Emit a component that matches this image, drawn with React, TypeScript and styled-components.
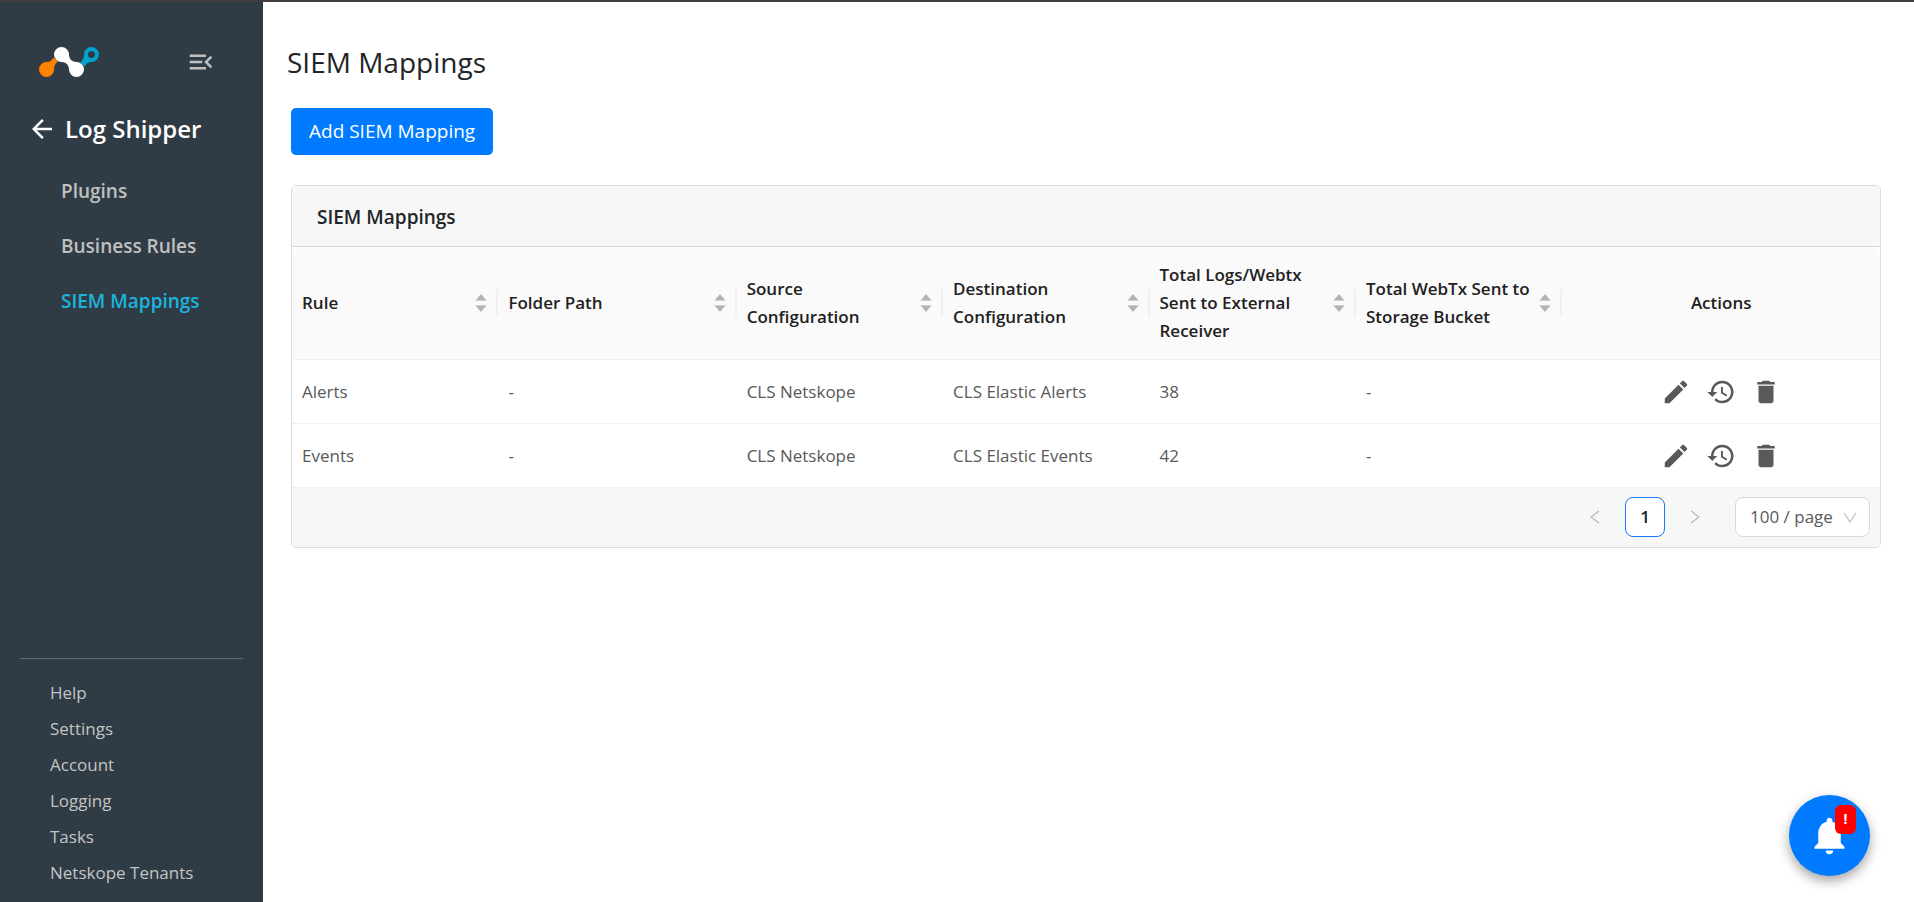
import React from 'react';
import styled, { createGlobalStyle } from 'styled-components';
import { MdArrowBack, MdDelete, MdEdit, MdHistory, MdMenuOpen, MdNotifications } from 'react-icons/md';

const GlobalStyle = createGlobalStyle`
  *, *::before, *::after { box-sizing: border-box; }
  body {
    margin: 0;
    background: #ffffff;
    color: #212529;
    font-family: "Open Sans", "Noto Sans", sans-serif;
    font-size: 17px;
    line-height: 28px;
  }
  button, select { font: inherit; color: inherit; }
  button { cursor: pointer; }
`;

const Page = styled.div`
  display: flex;
  min-height: 100vh;
  border-top: 2px solid #3f3d3f;
`;

const Sidebar = styled.aside`
  flex: 0 0 263px;
  display: flex;
  flex-direction: column;
  background: #303c45;
  color: #c0c0c0;
`;

const BrandRow = styled.div`
  display: flex;
  align-items: center;
  justify-content: space-between;
  padding: 45px 47px 0 39px;
`;

const IconButton = styled.button`
  display: inline-flex;
  padding: 0;
  border: 0;
  background: none;
`;

const SectionLink = styled.a`
  display: flex;
  align-items: center;
  gap: 8px;
  margin: 34px 0 0 27px;
  color: #ffffff;
  font-size: 24px;
  font-weight: 600;
  line-height: 36px;
  text-decoration: none;
`;

const Nav = styled.nav`
  display: flex;
  flex-direction: column;
  gap: 25px;
  padding: 29px 0 0 61px;
`;

const NavLink = styled.a<{ $active?: boolean }>`
  color: ${({ $active }) => ($active ? '#1cb4de' : '#c0c0c0')};
  font-size: 19px;
  font-weight: 600;
  line-height: 30px;
  text-decoration: none;
`;

const FooterNav = styled.nav`
  display: flex;
  flex-direction: column;
  margin: auto 20px 0;
  padding: 16px 0 11px 30px;
  border-top: 1px solid #5f6e73;
`;

const FooterLink = styled.a`
  color: #c4c4c4;
  line-height: 36px;
  text-decoration: none;
`;

const Main = styled.main`
  flex: 1;
  min-width: 0;
  padding: 40px 33px 40px 28px;
`;

const Title = styled.h1`
  margin: 0 0 0 -4px;
  font-size: 28px;
  font-weight: 400;
  line-height: 40px;
`;

const PrimaryButton = styled.button`
  margin: 26px 0 30px;
  padding: 8px 18px;
  border: 0;
  border-radius: 5px;
  background: #007bff;
  color: #ffffff;
  font-size: 19px;
  line-height: 31px;
`;

const Card = styled.section`
  border: 1px solid #dcdcdc;
  border-radius: 5px;
  overflow: hidden;
`;

const CardTitle = styled.h2`
  margin: 0;
  padding: 16px 25px 14px;
  border-bottom: 1px solid #d8d8d8;
  background: #f7f7f7;
  font-size: 19px;
  font-weight: 600;
  line-height: 30px;
`;

const Table = styled.table`
  width: 100%;
  table-layout: fixed;
  border-collapse: separate;
  border-spacing: 0;
`;

const HeadCell = styled.th<{ $width: string; $align?: string }>`
  width: ${({ $width }) => $width};
  padding: 14px 0 14px 10px;
  border-bottom: 1px solid #f0f0f0;
  background: #fafafa;
  color: #212121;
  font-weight: 600;
  text-align: ${({ $align }) => $align || 'left'};
  &:first-child { border-top-left-radius: 8px; }
  &:last-child { padding: 14px 10px; border-top-right-radius: 8px; }
`;

const HeadContent = styled.div`
  display: flex;
  align-items: center;
  gap: 4px;
`;

const HeadLabel = styled.span`
  flex: 1;
`;

const Sorter = styled.button`
  display: flex;
  align-items: center;
  height: 28px;
  padding: 0 9px 0 0;
  border: 0;
  border-right: 2px solid #f0f0f0;
  background: none;
`;

const Cell = styled.td`
  height: 64px;
  padding: 0 10px;
  border-bottom: 1px solid #f0f0f0;
  color: #595959;
`;

const Actions = styled.div`
  display: flex;
  justify-content: center;
  gap: 15px;
  color: #595959;
`;

const TableFooter = styled.div`
  display: flex;
  align-items: center;
  justify-content: flex-end;
  gap: 10px;
  padding: 9px 10px 10px;
  background: #f7f7f7;
`;

const PageButton = styled.button<{ $current?: boolean }>`
  display: flex;
  align-items: center;
  justify-content: center;
  width: 40px;
  height: 40px;
  padding: 0;
  border: 1px solid ${({ $current }) => ($current ? '#1677ff' : 'transparent')};
  border-radius: 8px;
  background: ${({ $current }) => ($current ? '#ffffff' : 'transparent')};
  color: #212121;
  font-weight: 600;
`;

const SelectWrap = styled.div`
  position: relative;
  margin-left: 10px;
  svg {
    position: absolute;
    top: 15px;
    right: 13px;
    pointer-events: none;
  }
`;

const PageSize = styled.select`
  appearance: none;
  display: block;
  width: 135px;
  height: 40px;
  padding: 0 14px;
  border: 1px solid #d9d9d9;
  border-radius: 8px;
  background: #ffffff;
  color: #595959;
`;

const Bell = styled.button`
  position: fixed;
  right: 44px;
  bottom: 26px;
  display: flex;
  align-items: center;
  justify-content: center;
  width: 81px;
  height: 81px;
  padding: 0;
  border: 0;
  border-radius: 50%;
  background: #007bff;
  color: #ffffff;
  box-shadow: 0 5px 12px rgba(0, 0, 0, 0.36);
`;

const BellBadge = styled.span`
  position: absolute;
  top: 10px;
  right: 14px;
  width: 21px;
  height: 29px;
  border-radius: 6px;
  background: #ff0000;
  font-size: 14px;
  font-weight: 700;
  line-height: 28px;
`;

const Logo = () => (
  <svg width="60" height="30" viewBox="0 0 60 30" role="img" aria-label="Netskope">
    <path
      fill="#ff8200"
      d="M7.500 15C11 15 12.500 13.500 14.500 10.500L18.800 14.600C16 17 15 19 15 22.500A7.500 7.500 0 1 1 7.500 15Z"
    />
    <path
      fillRule="evenodd"
      fill="#00a3cc"
      d="M52.500 0A7.500 7.500 0 0 1 52.500 15C49 15 47.500 16.500 45.500 19.500L41.200 15.400C44 13 45 11 45 7.500A7.500 7.500 0 0 1 52.500 0ZM52.500 4A3.500 3.500 0 1 0 52.500 11A3.500 3.500 0 1 0 52.500 4Z"
    />
    <path
      fill="#ffffff"
      d="M22.500 0A7.500 7.500 0 0 1 30 7.500C30 12 33 15 37.500 15A7.500 7.500 0 1 1 30 22.500C30 18 27 15 22.500 15A7.500 7.500 0 1 1 22.500 0Z"
    />
  </svg>
);

const SortIcon = () => (
  <svg width="12" height="18" viewBox="0 0 12 18" aria-hidden="true">
    <path d="M6 0L11 6H1Z" fill="#b3b3b3" />
    <path d="M0.500 6H11.500V7H0.500ZM0.500 11H11.500V12H0.500Z" fill="#d0d0d0" />
    <path d="M1 12H11L6 18Z" fill="#b3b3b3" />
  </svg>
);

const Chevron = ({ direction }: { direction: 'left' | 'right' }) => (
  <svg width="10" height="14" viewBox="0 0 10 14" fill="none" stroke="#b8b8b8" strokeWidth="1.300" aria-hidden="true">
    <path d={direction === 'left' ? 'M9 1L1 7L9 13' : 'M1 1L9 7L1 13'} />
  </svg>
);

const navItems = [
  { label: 'Plugins', active: false },
  { label: 'Business Rules', active: false },
  { label: 'SIEM Mappings', active: true },
];

const footerItems = ['Help', 'Settings', 'Account', 'Logging', 'Tasks', 'Netskope Tenants'];

const columns = [
  { label: 'Rule', width: '13%' },
  { label: 'Folder Path', width: '15%' },
  { label: 'Source Configuration', width: '13%' },
  { label: 'Destination Configuration', width: '13%' },
  { label: 'Total Logs/Webtx Sent to External Receiver', width: '13%' },
  { label: 'Total WebTx Sent to Storage Bucket', width: '13%' },
];

const rows = [
  ['Alerts', '-', 'CLS Netskope', 'CLS Elastic Alerts', '38', '-'],
  ['Events', '-', 'CLS Netskope', 'CLS Elastic Events', '42', '-'],
];

export default function App() {
  return (
    <>
      <GlobalStyle />
      <Page>
        <Sidebar>
          <BrandRow>
            <Logo />
            <IconButton type="button" aria-label="Collapse menu">
              <MdMenuOpen size={30} />
            </IconButton>
          </BrandRow>
          <SectionLink href="#">
            <MdArrowBack size={30} />
            Log Shipper
          </SectionLink>
          <Nav aria-label="Log Shipper">
            {navItems.map(({ label, active }) => (
              <NavLink key={label} href="#" $active={active} aria-current={active ? 'page' : undefined}>
                {label}
              </NavLink>
            ))}
          </Nav>
          <FooterNav aria-label="General">
            {footerItems.map((label) => (
              <FooterLink key={label} href="#">
                {label}
              </FooterLink>
            ))}
          </FooterNav>
        </Sidebar>
        <Main>
          <Title>SIEM Mappings</Title>
          <PrimaryButton type="button">Add SIEM Mapping</PrimaryButton>
          <Card>
            <CardTitle>SIEM Mappings</CardTitle>
            <Table>
              <thead>
                <tr>
                  {columns.map(({ label, width }) => (
                    <HeadCell key={label} $width={width} scope="col">
                      <HeadContent>
                        <HeadLabel>{label}</HeadLabel>
                        <Sorter type="button" aria-label={`Sort by ${label}`}>
                          <SortIcon />
                        </Sorter>
                      </HeadContent>
                    </HeadCell>
                  ))}
                  <HeadCell $width="20%" $align="center" scope="col">
                    Actions
                  </HeadCell>
                </tr>
              </thead>
              <tbody>
                {rows.map((row) => (
                  <tr key={row[0]}>
                    {row.map((value, index) => (
                      <Cell key={index}>{value}</Cell>
                    ))}
                    <Cell>
                      <Actions>
                        <IconButton type="button" aria-label={`Edit ${row[0]}`}>
                          <MdEdit size={30} />
                        </IconButton>
                        <IconButton type="button" aria-label={`History of ${row[0]}`}>
                          <MdHistory size={30} />
                        </IconButton>
                        <IconButton type="button" aria-label={`Delete ${row[0]}`}>
                          <MdDelete size={30} />
                        </IconButton>
                      </Actions>
                    </Cell>
                  </tr>
                ))}
              </tbody>
            </Table>
            <TableFooter>
              <PageButton type="button" aria-label="Previous page">
                <Chevron direction="left" />
              </PageButton>
              <PageButton type="button" $current aria-current="page">
                1
              </PageButton>
              <PageButton type="button" aria-label="Next page">
                <Chevron direction="right" />
              </PageButton>
              <SelectWrap>
                <PageSize aria-label="Page size" defaultValue="100">
                  <option value="100">100 / page</option>
                </PageSize>
                <svg width="14" height="12" viewBox="0 0 14 12" fill="none" stroke="#bfbfbf" strokeWidth="1.300" aria-hidden="true">
                  <path d="M1 1L7 10L13 1" />
                </svg>
              </SelectWrap>
            </TableFooter>
          </Card>
        </Main>
      </Page>
      <Bell type="button" aria-label="Notifications">
        <MdNotifications size={45} />
        <BellBadge>!</BellBadge>
      </Bell>
    </>
  );
}
